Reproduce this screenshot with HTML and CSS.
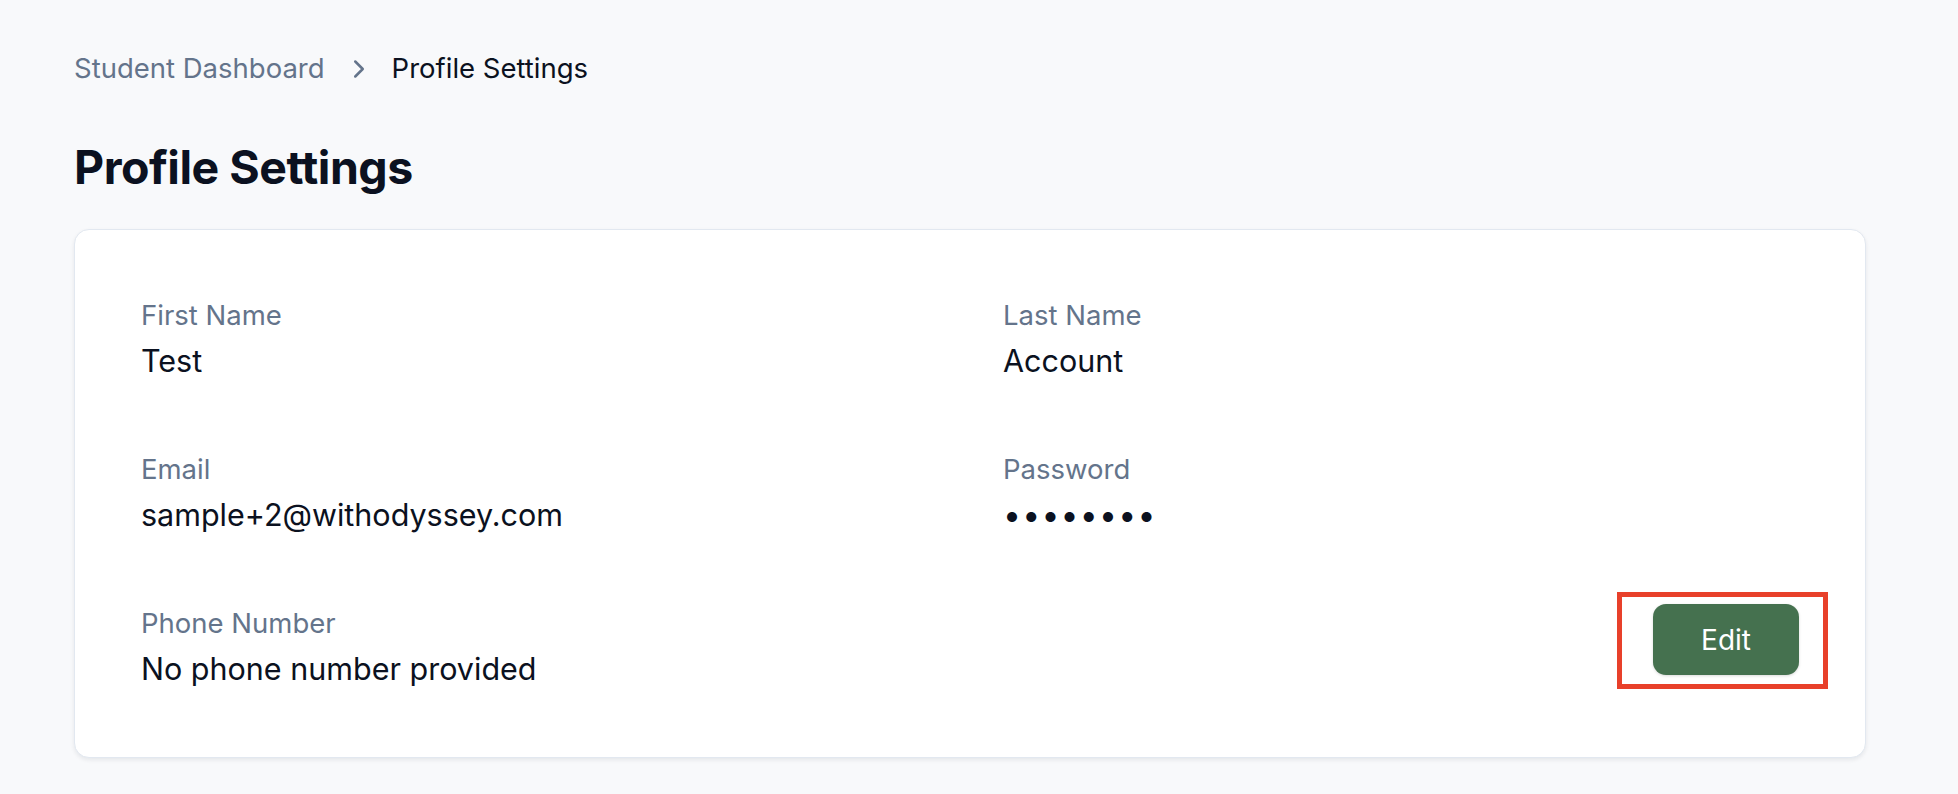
FILE: index.html
```html
<!DOCTYPE html>
<html lang="en">
<head>
  <meta charset="UTF-8">
  <title>Profile Settings</title>
  <link rel="stylesheet" href="styles.css">
</head>
<body>
  <nav class="breadcrumb">
    <a href="#" class="crumb-link">Student Dashboard</a>
    <svg class="crumb-sep" viewBox="0 0 24 24" fill="none" stroke="currentColor" stroke-width="2" stroke-linecap="round" stroke-linejoin="round">
      <path d="m9 18 6-6-6-6"/>
    </svg>
    <span class="crumb-current">Profile Settings</span>
  </nav>

  <h1 class="page-title">Profile Settings</h1>

  <div class="profile-card">
    <div class="field">
      <div class="field-label">First Name</div>
      <div class="field-value">Test</div>
    </div>
    <div class="field">
      <div class="field-label">Last Name</div>
      <div class="field-value">Account</div>
    </div>
    <div class="field">
      <div class="field-label">Email</div>
      <div class="field-value">sample+2@withodyssey.com</div>
    </div>
    <div class="field">
      <div class="field-label">Password</div>
      <div class="field-value password">••••••••</div>
    </div>
    <div class="field">
      <div class="field-label">Phone Number</div>
      <div class="field-value">No phone number provided</div>
    </div>
    <div class="actions">
      <button class="edit-btn">Edit</button>
    </div>
  </div>
</body>
</html>
```

FILE: styles.css
```css
body {
  margin: 0;
  padding: 49px 92px 40px 74px;
  background: #f8f9fb;
  font-family: Inter, "Noto Sans", sans-serif;
  color: #0b1120;
}

/* breadcrumb */
.breadcrumb {
  display: flex;
  align-items: center;
  font-size: 27.5px;
  line-height: 39px;
}

.crumb-link {
  color: #64748b;
  text-decoration: none;
}

.crumb-sep {
  width: 30px;
  height: 30px;
  margin: 0 18px 0 19px;
  color: #64748b;
}

.crumb-current {
  color: #0b1120;
}

.page-title {
  margin: 52px 0 34px;
  font-size: 46.5px;
  line-height: 55px;
  font-weight: 700;
  letter-spacing: -0.5px;
}

/* card */
.profile-card {
  display: grid;
  grid-template-columns: 1fr 1fr;
  column-gap: 66px;
  row-gap: 67px;
  padding: 66px;
  background: #fff;
  border: 1px solid #e2e8f0;
  border-radius: 15px;
  box-shadow: 0 2px 4px rgba(15, 23, 42, 0.08);
}

.field-label {
  font-size: 27.5px;
  line-height: 39px;
  color: #64748b;
}

.field-value {
  margin-top: 4px;
  font-size: 30.5px;
  line-height: 44px;
  color: #0b1120;
}

.field-value.password {
  font-size: 32px;
  letter-spacing: 1.2px;
}

.actions {
  display: flex;
  justify-content: flex-end;
  align-items: flex-start;
}

.edit-btn {
  position: relative;
  height: 71px;
  padding: 0 48px;
  background: #45714f;
  color: #fff;
  border: none;
  border-radius: 13px;
  font-family: inherit;
  font-size: 28px;
  font-weight: 400;
  box-shadow: 0 1px 3px rgba(0, 0, 0, 0.15);
  cursor: pointer;
}

/* highlight frame around the edit action */
.edit-btn::after {
  content: "";
  position: absolute;
  top: -12px;
  left: -36px;
  right: -29px;
  bottom: -14px;
  border: 5px solid #e8402a;
  pointer-events: none;
}
```
